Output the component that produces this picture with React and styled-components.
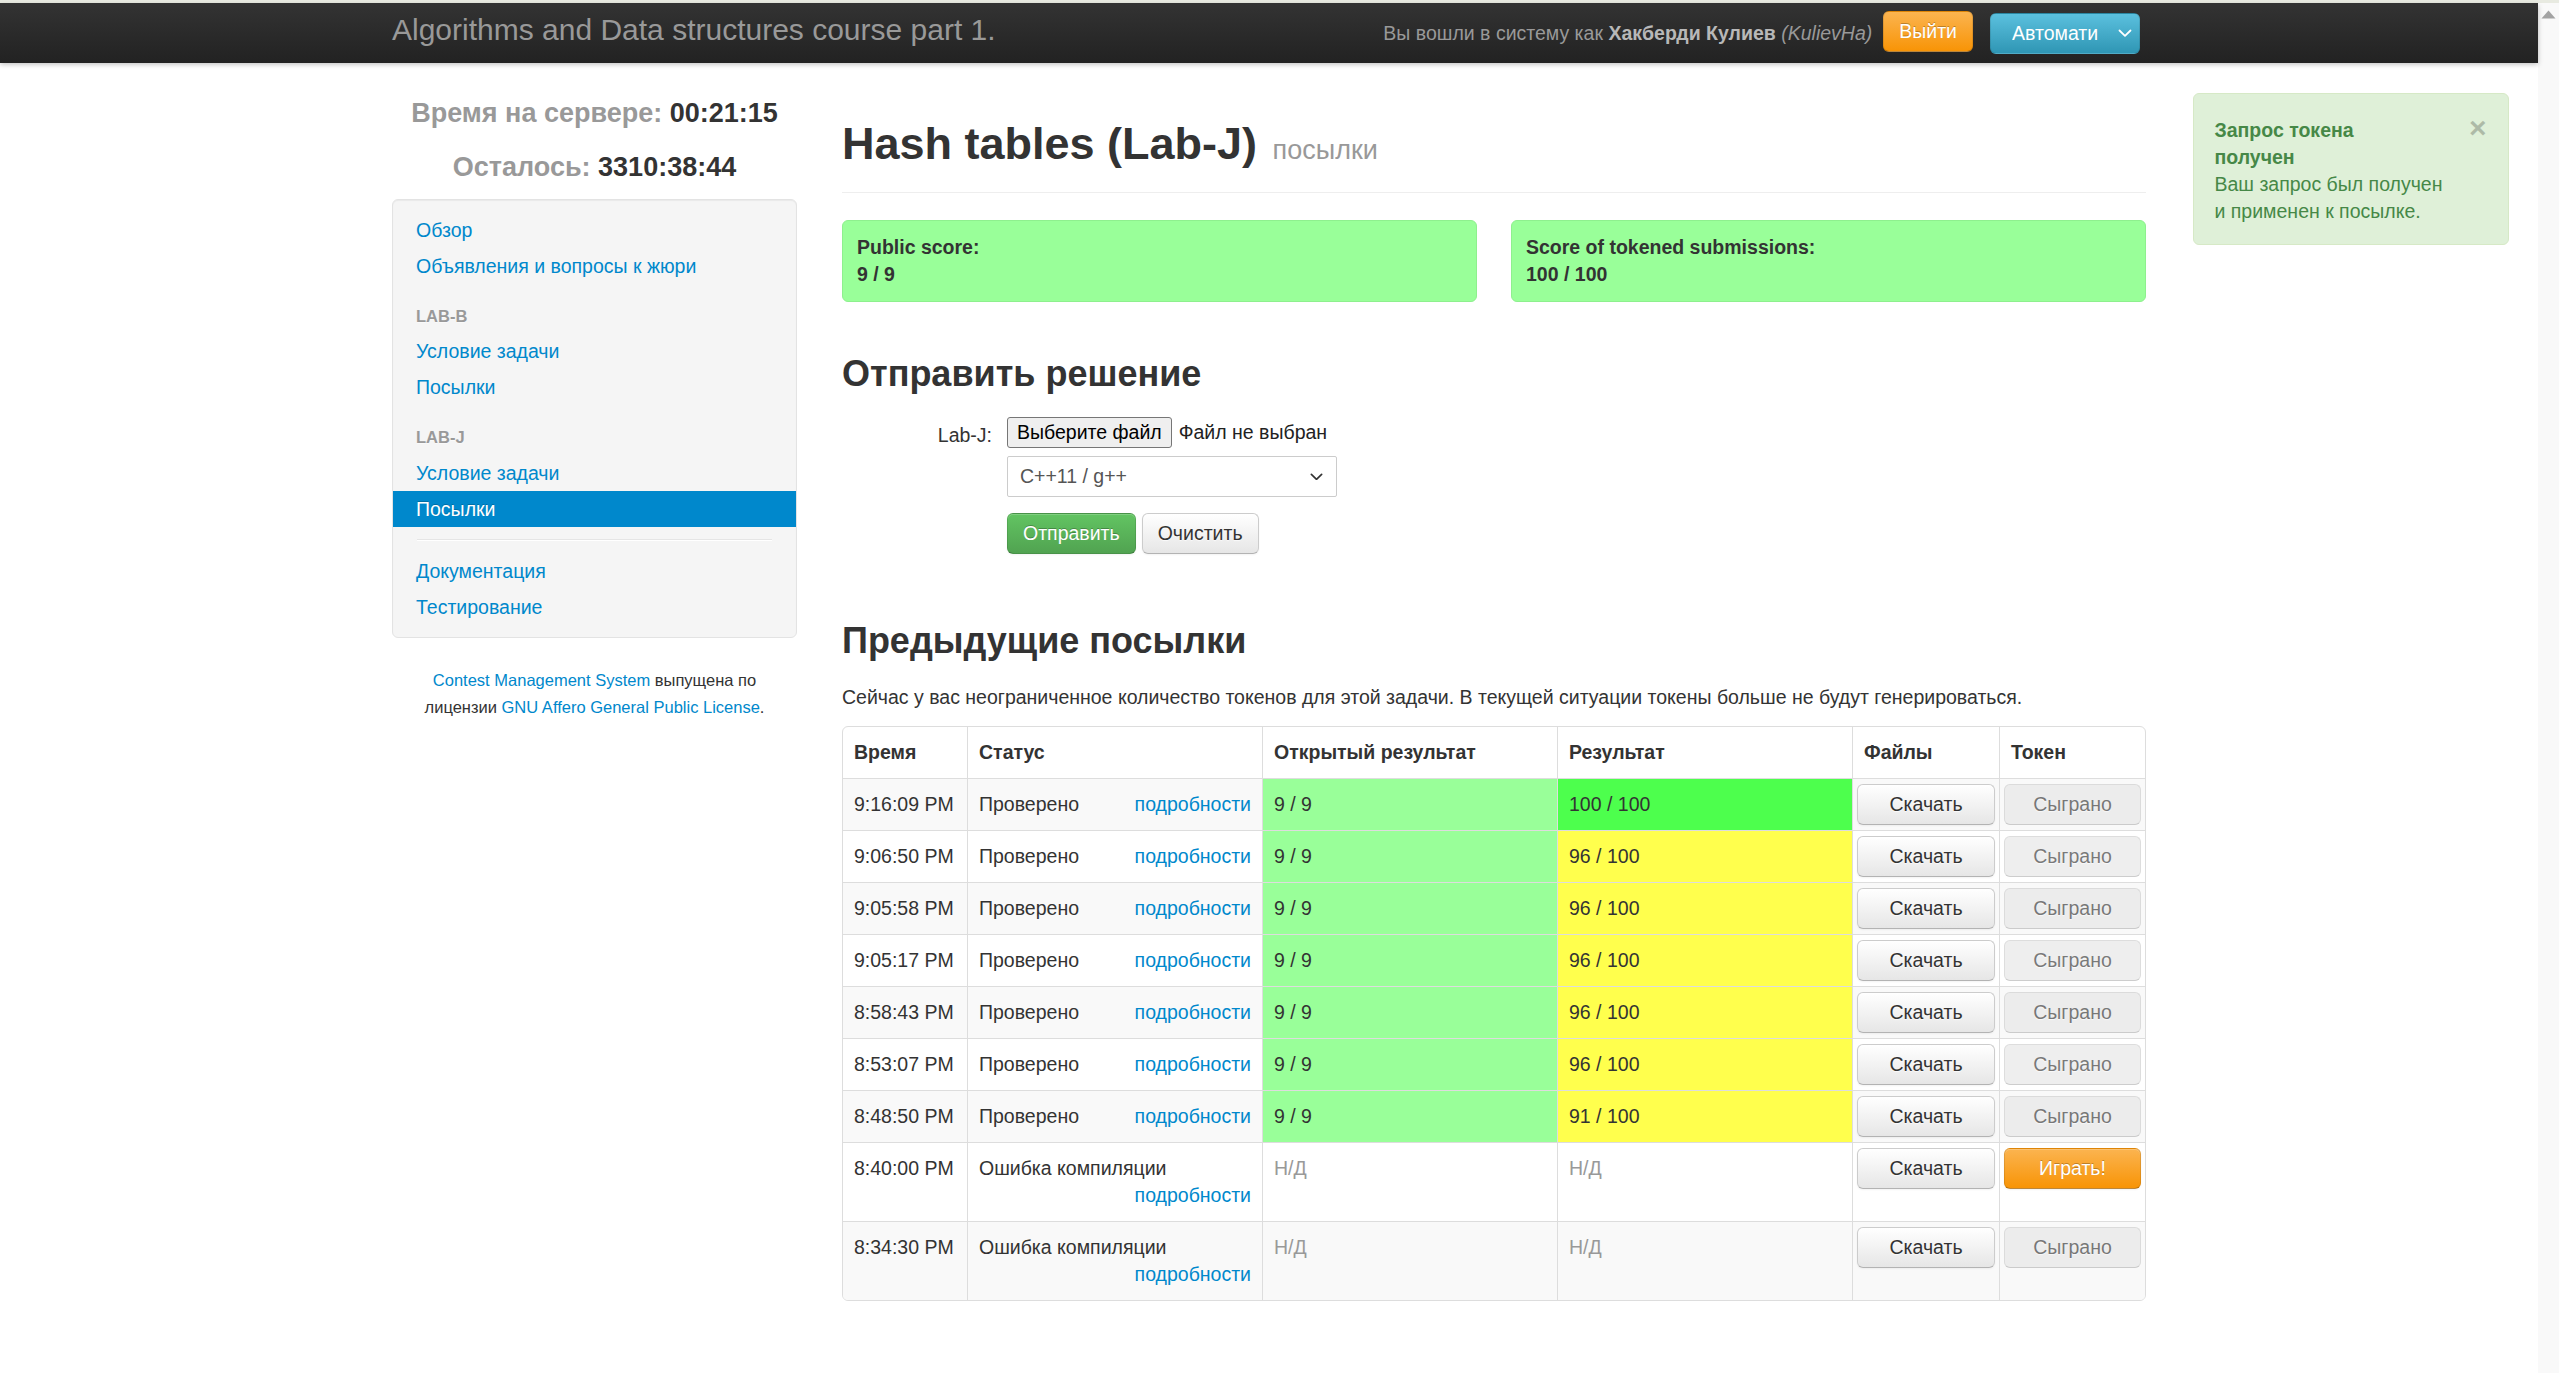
import React from 'react';
import styled, { createGlobalStyle, css } from 'styled-components';

const GlobalStyle = createGlobalStyle`
  html, body {
    margin: 0;
    padding: 0;
    overflow: hidden;
    background: #fff;
  }
  body {
    font-family: "Liberation Sans", Arial, sans-serif;
    font-size: 19.5px;
    line-height: 27px;
    color: #333;
  }
  * { box-sizing: border-box; }
`;

const submissions = [
  { time: '9:16:09 PM', status: 'Проверено', open: '9 / 9', result: '100 / 100', tone: 'full', played: true },
  { time: '9:06:50 PM', status: 'Проверено', open: '9 / 9', result: '96 / 100', tone: 'partial', played: true },
  { time: '9:05:58 PM', status: 'Проверено', open: '9 / 9', result: '96 / 100', tone: 'partial', played: true },
  { time: '9:05:17 PM', status: 'Проверено', open: '9 / 9', result: '96 / 100', tone: 'partial', played: true },
  { time: '8:58:43 PM', status: 'Проверено', open: '9 / 9', result: '96 / 100', tone: 'partial', played: true },
  { time: '8:53:07 PM', status: 'Проверено', open: '9 / 9', result: '96 / 100', tone: 'partial', played: true },
  { time: '8:48:50 PM', status: 'Проверено', open: '9 / 9', result: '91 / 100', tone: 'partial', played: true },
  { time: '8:40:00 PM', status: 'Ошибка компиляции', open: null, result: null, played: false },
  { time: '8:34:30 PM', status: 'Ошибка компиляции', open: null, result: null, played: true }
];

const tones = {
  open: '#99ff99',
  full: '#4dff4d',
  partial: '#ffff4d'
};

const Frame = styled.div`
  height: 100vh;
  display: flex;
  flex-direction: column;
`;

const TopStrip = styled.div`
  height: 3px;
  background: #e8eae1;
  flex-shrink: 0;
`;

const Viewport = styled.div`
  flex: 1;
  display: flex;
  min-height: 0;
`;

const Page = styled.div`
  flex: 1;
  min-width: 0;
`;

const Scrollbar = styled.div`
  width: 21px;
  background: #f9f9f9;
  display: flex;
  justify-content: center;
  padding-top: 7px;
`;

const Navbar = styled.div`
  height: 60px;
  background: linear-gradient(to bottom, #333333, #222222);
  box-shadow: 0 1.5px 5px rgba(0, 0, 0, 0.25);
  position: relative;
  z-index: 1;
`;

const NavInner = styled.div`
  margin-left: 392px;
  width: 1754px;
  height: 100%;
  display: flex;
  justify-content: space-between;
  align-items: flex-start;
`;

const Brand = styled.div`
  font-size: 30px;
  line-height: 30px;
  padding-top: 12px;
  color: #999;
  white-space: nowrap;
`;

const NavRight = styled.div`
  display: flex;
  align-items: flex-start;
  padding-right: 6px;
`;

const NavText = styled.div`
  margin-top: 16.5px;
  margin-right: 11px;
  color: #999;
  white-space: nowrap;

  b { color: #b8b8b8; }
  i { color: #999; }
`;

const LogoutButton = styled.div`
  margin-top: 8px;
  height: 41px;
  padding: 0 15px;
  line-height: 39px;
  color: #fff;
  background: linear-gradient(to bottom, #fbb450, #f89406);
  border: 1px solid rgba(0, 0, 0, 0.1);
  border-bottom-color: rgba(0, 0, 0, 0.25);
  border-radius: 6px;
  text-shadow: 0 -1px 0 rgba(0, 0, 0, 0.25);
`;

const LangSelect = styled.div`
  margin-top: 10px;
  margin-left: 17px;
  width: 150px;
  height: 41px;
  display: flex;
  align-items: center;
  padding-left: 21px;
  color: #fff;
  background: linear-gradient(to bottom, #5bc0de, #2f96b4);
  border: 1px solid rgba(0, 0, 0, 0.1);
  border-radius: 6px;
`;

const LangText = styled.span`
  width: 86px;
  overflow: hidden;
  white-space: nowrap;
`;

const LangChevron = styled.span`
  display: flex;
  margin-left: 20px;
`;

const Body = styled.div`
  display: flex;
  align-items: flex-start;
`;

const Container = styled.div`
  margin-left: 392px;
  width: 1754px;
  display: flex;
  gap: 45px;
  align-items: flex-start;
`;

const Sidebar = styled.div`
  width: 405px;
  flex-shrink: 0;
`;

const ServerTime = styled.div`
  margin-top: 23px;
  text-align: center;
  font-size: 27px;
  line-height: 54px;
  font-weight: bold;
  color: #333;
`;

const TimeLabel = styled.span`
  color: #999;
`;

const Well = styled.div`
  margin-top: 5px;
  background: #f5f5f5;
  border: 1px solid #e3e3e3;
  border-radius: 6px;
  padding: 12px 0;
  box-shadow: inset 0 1px 1px rgba(0, 0, 0, 0.05);
`;

const NavLink = styled.a`
  display: block;
  padding: 4.5px 23px;
  line-height: 27px;
  color: #0088cc;
  text-decoration: none;

  ${(p) =>
    p.$active &&
    css`
      background: #0088cc;
      color: #fff;
      text-shadow: 0 -1px 0 rgba(0, 0, 0, 0.2);
    `}
`;

const NavHeader = styled.div`
  margin-top: 13.5px;
  padding: 0 23px;
  line-height: 36px;
  font-size: 16.5px;
  font-weight: bold;
  text-transform: uppercase;
  color: #999;
  text-shadow: 0 1px 0 rgba(255, 255, 255, 0.5);
`;

const NavDivider = styled.div`
  margin: 12px 24px;
  height: 2px;
  background: #e5e5e5;
  border-bottom: 1px solid #fff;
`;

const SideFooter = styled.p`
  margin: 29px 0 0;
  padding: 0 20px;
  text-align: center;
  font-size: 16.5px;
  line-height: 27px;
  color: #333;
`;

const FooterLink = styled.a`
  color: #0088cc;
  text-decoration: none;
`;

const Main = styled.div`
  width: 1304px;
  flex-shrink: 0;
`;

const PageHeader = styled.div`
  margin-top: 54px;
  padding-bottom: 21px;
  border-bottom: 1px solid #eee;
`;

const Title = styled.h1`
  margin: 0;
  font-size: 45px;
  line-height: 54px;
  font-weight: bold;
  color: #333;
`;

const TitleSmall = styled.small`
  font-size: 27px;
  line-height: 1;
  font-weight: normal;
  color: #999;
  margin-left: 3px;
`;

const ScoreRow = styled.div`
  margin-top: 27px;
  display: flex;
  gap: 34px;
`;

const ScoreBox = styled.div`
  flex: 1;
  padding: 13px 14px;
  background: #99ff99;
  border: 1px solid #8ef08e;
  border-radius: 6px;
  font-weight: bold;
  color: #333;
`;

const SectionTitle = styled.h2`
  margin: ${(p) => p.$top}px 0 0;
  font-size: 36px;
  line-height: 54px;
  font-weight: bold;
  color: #333;
`;

const SubmitForm = styled.div`
  margin-top: 11px;
  display: grid;
  grid-template-columns: 150px 1fr;
  column-gap: 15px;
`;

const FieldLabel = styled.div`
  padding-top: 10px;
  text-align: right;
  color: #333;
`;

const Controls = styled.div`
  display: flex;
  flex-direction: column;
  align-items: flex-start;
`;

const FileRow = styled.div`
  margin-top: 5px;
  display: flex;
  align-items: center;
  height: 31px;
  color: #222;
`;

const FileButton = styled.div`
  height: 31px;
  padding: 0 9px;
  line-height: 29px;
  background: #efefef;
  border: 1px solid #767676;
  border-radius: 3px;
  color: #000;
  white-space: nowrap;
`;

const FileName = styled.span`
  margin-left: 7px;
  white-space: nowrap;
`;

const LangPicker = styled.div`
  margin-top: 8px;
  width: 330px;
  height: 41px;
  display: flex;
  align-items: center;
  justify-content: space-between;
  padding: 0 13px 0 12px;
  background: #fff;
  border: 1px solid #ccc;
  border-radius: 2px;
  color: #555;
`;

const FormActions = styled.div`
  margin-top: 16px;
  display: flex;
  gap: 6px;
`;

const Button = styled.div`
  height: 41px;
  padding: 6px 15px;
  line-height: 27px;
  text-align: center;
  white-space: nowrap;
  border-radius: 6px;
  border: 1px solid #ccc;
  border-bottom-color: #b3b3b3;
  color: #333;
  background: linear-gradient(to bottom, #ffffff, #e6e6e6);
  text-shadow: 0 1px 1px rgba(255, 255, 255, 0.75);
  box-shadow: inset 0 1px 0 rgba(255, 255, 255, 0.2), 0 1px 2px rgba(0, 0, 0, 0.05);

  ${(p) =>
    p.$block &&
    css`
      width: 100%;
      padding: 6px 0;
    `}

  ${(p) =>
    p.$variant === 'success' &&
    css`
      color: #fff;
      background: linear-gradient(to bottom, #62c462, #51a351);
      border-color: rgba(0, 0, 0, 0.1) rgba(0, 0, 0, 0.1) rgba(0, 0, 0, 0.25);
      text-shadow: 0 -1px 0 rgba(0, 0, 0, 0.25);
    `}

  ${(p) =>
    p.$variant === 'warning' &&
    css`
      color: #fff;
      background: linear-gradient(to bottom, #fbb450, #f89406);
      border-color: rgba(0, 0, 0, 0.1) rgba(0, 0, 0, 0.1) rgba(0, 0, 0, 0.25);
      text-shadow: 0 -1px 0 rgba(0, 0, 0, 0.25);
    `}

  ${(p) =>
    p.$disabled &&
    css`
      background: #e6e6e6;
      opacity: 0.65;
      box-shadow: none;
    `}
`;

const Note = styled.p`
  margin: 16px 0 0;
`;

const TableFrame = styled.div`
  margin-top: 15.5px;
  border: 1px solid #ddd;
  border-radius: 6px;
  overflow: hidden;
`;

const Table = styled.table`
  width: 100%;
  table-layout: fixed;
  border-collapse: separate;
  border-spacing: 0;
`;

const Th = styled.th`
  width: ${(p) => p.$w}px;
  padding: 12px 11px;
  text-align: left;
  font-weight: bold;
  vertical-align: bottom;
  border-left: 1px solid #ddd;

  &:first-child { border-left: 0; }
`;

const Td = styled.td`
  padding: ${(p) => (p.$tight ? '5px 4px' : '12px 11px')};
  vertical-align: top;
  white-space: ${(p) => (p.$nowrap ? 'nowrap' : 'normal')};
  border-top: 1px solid #ddd;
  border-left: 1px solid #ddd;
  background: ${(p) => (p.$tone ? tones[p.$tone] : p.$striped ? '#f9f9f9' : '#fff')};
  color: ${(p) => (p.$muted ? '#999' : '#333')};

  &:first-child { border-left: 0; }
`;

const StatusWrap = styled.div`
  display: flex;
  flex-wrap: wrap;
`;

const DetailsLink = styled.a`
  margin-left: auto;
  color: #0088cc;
  text-decoration: none;
  white-space: nowrap;
`;

const Notifications = styled.div`
  margin-left: 46.5px;
  margin-top: 30px;
  width: 316px;
  flex-shrink: 0;
`;

const Alert = styled.div`
  padding: 22.5px 52.5px 19.5px 21px;
  background: #dff0d8;
  border: 1px solid #d6e9c6;
  border-radius: 6px;
  color: #468847;
`;

const AlertTitle = styled.div`
  font-weight: bold;
`;

const CloseButton = styled.div`
  float: right;
  position: relative;
  top: -3px;
  right: -31.5px;
  font-size: 30px;
  line-height: 27px;
  font-weight: bold;
  color: #000;
  opacity: 0.22;
`;

const Chevron = ({ color = '#fff', size = 14 }) => (
  <svg width={size} height={size * 0.6} viewBox="0 0 14 8.4" fill="none">
    <polyline points="1.5,1.5 7,6.8 12.5,1.5" stroke={color} strokeWidth="1.8" strokeLinecap="round" strokeLinejoin="round" />
  </svg>
);

const SubmissionRow = ({ row, striped }) => (
  <tr>
    <Td $striped={striped} $nowrap>
      {row.time}
    </Td>
    <Td $striped={striped}>
      <StatusWrap>
        <span>{row.status}</span>
        <DetailsLink href="#">подробности</DetailsLink>
      </StatusWrap>
    </Td>
    {row.open ? (
      <Td $tone="open">{row.open}</Td>
    ) : (
      <Td $striped={striped} $muted>
        Н/Д
      </Td>
    )}
    {row.result ? (
      <Td $tone={row.tone}>{row.result}</Td>
    ) : (
      <Td $striped={striped} $muted>
        Н/Д
      </Td>
    )}
    <Td $striped={striped} $tight>
      <Button $block>Скачать</Button>
    </Td>
    <Td $striped={striped} $tight>
      {row.played ? (
        <Button $block $disabled>
          Сыграно
        </Button>
      ) : (
        <Button $block $variant="warning">
          Играть!
        </Button>
      )}
    </Td>
  </tr>
);

const App = () => (
  <>
    <GlobalStyle />
    <Frame>
      <TopStrip />
      <Viewport>
        <Page>
          <Navbar>
            <NavInner>
              <Brand>Algorithms and Data structures course part 1.</Brand>
              <NavRight>
                <NavText>
                  Вы вошли в систему как <b>Хакберди Кулиев</b> <i>(KulievHa)</i>
                </NavText>
                <LogoutButton>Выйти</LogoutButton>
                <LangSelect>
                  <LangText>Автоматически</LangText>
                  <LangChevron>
                    <Chevron />
                  </LangChevron>
                </LangSelect>
              </NavRight>
            </NavInner>
          </Navbar>

          <Body>
            <Container>
              <Sidebar>
                <ServerTime>
                  <div>
                    <TimeLabel>Время на сервере:</TimeLabel> 00:21:15
                  </div>
                  <div>
                    <TimeLabel>Осталось:</TimeLabel> 3310:38:44
                  </div>
                </ServerTime>
                <Well>
                  <NavLink href="#">Обзор</NavLink>
                  <NavLink href="#">Объявления и вопросы к жюри</NavLink>
                  <NavHeader>Lab-B</NavHeader>
                  <NavLink href="#">Условие задачи</NavLink>
                  <NavLink href="#">Посылки</NavLink>
                  <NavHeader>Lab-J</NavHeader>
                  <NavLink href="#">Условие задачи</NavLink>
                  <NavLink href="#" $active>
                    Посылки
                  </NavLink>
                  <NavDivider />
                  <NavLink href="#">Документация</NavLink>
                  <NavLink href="#">Тестирование</NavLink>
                </Well>
                <SideFooter>
                  <FooterLink href="#">Contest Management System</FooterLink> выпущена по лицензии{' '}
                  <FooterLink href="#">GNU Affero General Public License</FooterLink>.
                </SideFooter>
              </Sidebar>

              <Main>
                <PageHeader>
                  <Title>
                    Hash tables (Lab-J) <TitleSmall>посылки</TitleSmall>
                  </Title>
                </PageHeader>

                <ScoreRow>
                  <ScoreBox>
                    Public score:
                    <br />9 / 9
                  </ScoreBox>
                  <ScoreBox>
                    Score of tokened submissions:
                    <br />
                    100 / 100
                  </ScoreBox>
                </ScoreRow>

                <SectionTitle $top={45}>Отправить решение</SectionTitle>
                <SubmitForm>
                  <FieldLabel>Lab-J:</FieldLabel>
                  <Controls>
                    <FileRow>
                      <FileButton>Выберите файл</FileButton>
                      <FileName>Файл не выбран</FileName>
                    </FileRow>
                    <LangPicker>
                      <span>C++11 / g++</span>
                      <Chevron color="#333" size={13} />
                    </LangPicker>
                    <FormActions>
                      <Button $variant="success">Отправить</Button>
                      <Button>Очистить</Button>
                    </FormActions>
                  </Controls>
                </SubmitForm>

                <SectionTitle $top={59.5}>Предыдущие посылки</SectionTitle>
                <Note>
                  Сейчас у вас неограниченное количество токенов для этой задачи. В текущей ситуации токены
                  больше не будут генерироваться.
                </Note>

                <TableFrame>
                  <Table>
                    <thead>
                      <tr>
                        <Th $w={124}>Время</Th>
                        <Th $w={295}>Статус</Th>
                        <Th $w={295}>Открытый результат</Th>
                        <Th $w={295}>Результат</Th>
                        <Th $w={147}>Файлы</Th>
                        <Th $w={146}>Токен</Th>
                      </tr>
                    </thead>
                    <tbody>
                      {submissions.map((row, i) => (
                        <SubmissionRow key={row.time} row={row} striped={i % 2 === 0} />
                      ))}
                    </tbody>
                  </Table>
                </TableFrame>
              </Main>
            </Container>

            <Notifications>
              <Alert>
                <CloseButton>×</CloseButton>
                <AlertTitle>Запрос токена получен</AlertTitle>
                Ваш запрос был получен и применен к посылке.
              </Alert>
            </Notifications>
          </Body>
        </Page>
        <Scrollbar>
          <svg width="15" height="9" viewBox="0 0 15 9">
            <polygon points="7.5,0.5 14.5,8.5 0.5,8.5" fill="#a3a3a3" />
          </svg>
        </Scrollbar>
      </Viewport>
    </Frame>
  </>
);

export default App;
